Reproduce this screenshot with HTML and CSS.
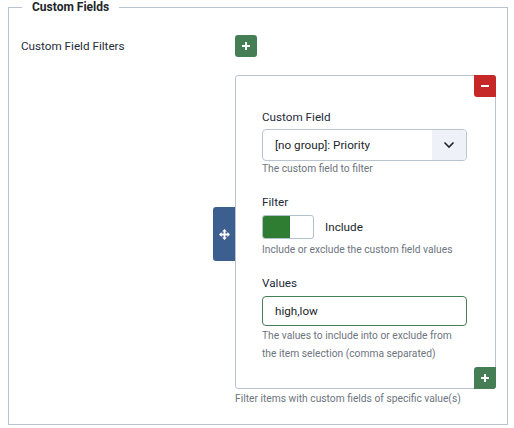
FILE: index.html
```html
<!DOCTYPE html>
<html>
<head>
<meta charset="utf-8">
<link rel="stylesheet" href="styles.css">
</head>
<body>
<div class="page">
  <fieldset class="fs">
    <legend class="fs-legend">Custom Fields</legend>
    <div class="row">
      <div class="row-label">Custom Field Filters</div>
      <div class="row-control">
        <button class="btn btn-add" type="button">
          <svg width="10" height="10" viewBox="0 0 10 10"><path d="M5 1v8M1 5h8" stroke="#fff" stroke-width="2"/></svg>
        </button>
        <div class="sub">
          <button class="btn btn-remove" type="button">
            <svg width="10" height="10" viewBox="0 0 10 10"><path d="M1 5h8" stroke="#fff" stroke-width="2"/></svg>
          </button>
          <div class="handle">
            <svg width="11" height="11" viewBox="0 0 12 12" fill="#fff"><path d="M6 0 8.6 2.8H7V5H9.2V3.4L12 6 9.2 8.6V7H7V9.2H8.6L6 12 3.4 9.2H5V7H2.8V8.6L0 6 2.8 3.4V5H5V2.8H3.4Z"/></svg>
          </div>
          <div class="lbl lbl-first">Custom Field</div>
          <div class="select">
            <span class="select-text">[no group]: Priority</span>
            <span class="select-arrow">
              <svg width="12" height="8" viewBox="0 0 12 8"><path d="M1.5 1.5 6 6l4.5-4.5" fill="none" stroke="#22262a" stroke-width="1.6"/></svg>
            </span>
          </div>
          <div class="help">The custom field to filter</div>
          <div class="lbl">Filter</div>
          <div class="toggle-row">
            <div class="toggle"><span class="toggle-on"></span></div>
            <span class="toggle-text">Include</span>
          </div>
          <div class="help help-2">Include or exclude the custom field values</div>
          <div class="lbl">Values</div>
          <div class="input">high,low</div>
          <div class="help help-3">The values to include into or exclude from the item selection (comma separated)</div>
          <button class="btn btn-add btn-add-bottom" type="button">
            <svg width="10" height="10" viewBox="0 0 10 10"><path d="M5 1v8M1 5h8" stroke="#fff" stroke-width="2"/></svg>
          </button>
        </div>
        <div class="desc">Filter items with custom fields of specific value(s)</div>
      </div>
    </div>
  </fieldset>
</div>
</body>
</html>
```
FILE: styles.css
```css
html, body { margin: 0; padding: 0; background: #fff; }
body { font-family: Roboto, "Noto Sans", sans-serif; color: #22262a; }
.page { padding: 0 6px 0 8px; }
.fs {
  margin: 0;
  border: 1px solid #b9c4d2;
  padding: 20px 11px 18px 12px;
  min-width: 0;
}
.fs-legend {
  margin-left: 1px;
  padding: 0 10px;
  font-size: 12px;
  font-weight: bold;
  line-height: 15px;
  color: #22262a;
}
.row { display: flex; align-items: flex-start; }
.row-label {
  width: 214px;
  flex: none;
  font-size: 11.7px;
  line-height: 22px;
  color: #1d2b3a;
}
.row-control { flex: 1; min-width: 0; }
.btn {
  width: 22px; height: 22px;
  border: 0; padding: 0; margin: 0;
  border-radius: 3px;
  display: flex; align-items: center; justify-content: center;
}
.btn-add { background: #457d54; }
.btn-remove { background: #c52827; position: absolute; top: -1px; right: -1px; border-radius: 0 3px 0 3px; }
.btn-add-bottom { position: absolute; bottom: -1px; right: -1px; border-radius: 3px 0 3px 0; }
.sub {
  position: relative;
  margin-top: 18px;
  border: 1px solid #b9c4d2;
  border-radius: 3px;
  padding: 33px 28px 25px 26px;
}
.handle {
  position: absolute;
  left: -23px; top: 131px;
  width: 22px; height: 54px;
  background: #3d5f8f;
  border-radius: 3px 0 0 3px;
  display: flex; align-items: center; justify-content: center;
}
.lbl { font-size: 11.7px; line-height: 16px; margin-top: 18px; color: #1d2b3a; }
.lbl-first { margin-top: 0; }
.select {
  margin-top: 4px;
  height: 32px;
  box-sizing: border-box;
  border: 1px solid #b9c4d2;
  border-radius: 4px;
  display: flex; align-items: center;
  overflow: hidden;
}
.select-text { flex: 1; padding-left: 12px; font-size: 11.7px; }
.select-arrow {
  width: 34px; height: 100%;
  background: #eef2f8;
  display: flex; align-items: center; justify-content: center;
}
.help {
  margin-top: 1px;
  font-size: 10.25px;
  line-height: 14px;
  color: #6d757e;
}
.help-2 { margin-top: 4px; }
.help-3 { line-height: 18px; margin-top: 1px; }
.toggle-row { display: flex; align-items: center; margin-top: 5px; }
.toggle {
  width: 52px; height: 24px;
  box-sizing: border-box;
  border: 1px solid #b2bfcd;
  border-radius: 3px;
  display: flex;
  overflow: hidden;
}
.toggle-on { width: 27px; height: 100%; background: #2e7d32; }
.toggle-text { margin-left: 11px; font-size: 11.7px; }
.input {
  margin-top: 5px;
  height: 30px;
  box-sizing: border-box;
  border: 1px solid #457d54;
  border-radius: 4px;
  padding-left: 12px;
  display: flex; align-items: center;
  font-size: 11.7px;
}
.desc { margin-top: 3px; font-size: 10.25px; line-height: 14px; color: #6d757e; }
```
